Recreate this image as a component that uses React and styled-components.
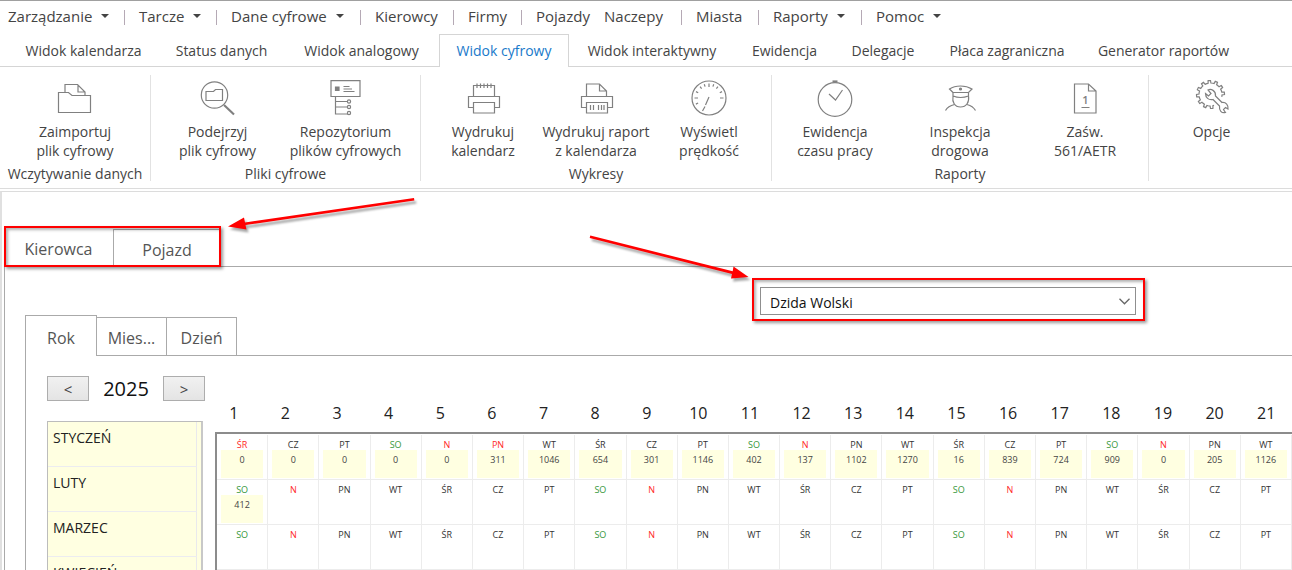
import React from 'react';
import styled, { createGlobalStyle, css } from 'styled-components';

const GlobalStyle = createGlobalStyle`
  *, *::before, *::after { box-sizing: border-box; }
  body {
    margin: 0;
    background: #fff;
    color: #444;
    font-family: "Open Sans", "Noto Sans", sans-serif;
    font-size: 14px;
  }
  button, select { font: inherit; color: inherit; }
`;

const Screen = styled.div`
  display: flex;
  flex-direction: column;
  height: 100vh;
  overflow: hidden;
`;

/* ---------- main menu ---------- */

const MenuBar = styled.nav`
  display: flex;
  flex: none;
  height: 34px;
  padding-bottom: 3px;
  border-top: 1px solid #a0a0a0;
`;

const MenuItem = styled.button`
  display: flex;
  align-items: center;
  flex: none;
  width: ${(p) => p.$width}px;
  padding: 0 0 0 ${(p) => p.$indent || 14}px;
  border: 0;
  background: none;
  font-size: 15px;
  line-height: 20px;
  white-space: nowrap;
`;

const Caret = styled.span`
  margin-left: 9px;
  border: 4px solid transparent;
  border-top-color: #444;
  border-bottom: 0;
`;

const Divider = styled.span`
  width: 1px;
  height: 15px;
  margin-top: 2px;
  margin-left: auto;
  background: #b5a9b5;
`;

/* ---------- ribbon ---------- */

const RibbonTabs = styled.div`
  display: flex;
  flex: none;
  height: 33px;
  padding-left: 8px;
  border-bottom: 1px solid #d5d5d5;
`;

const RibbonTab = styled.button`
  flex: none;
  width: ${(p) => p.$width}px;
  height: 33px;
  padding: 0 0 1px;
  border: 1px solid transparent;
  border-bottom: 0;
  background: none;
  white-space: nowrap;
  ${(p) => p.$active && css`
    border-color: #d5d5d5;
    background: #fff;
    color: #1979ca;
  `}
`;

const Ribbon = styled.div`
  display: flex;
  flex: none;
  height: 122px;
  padding: 8px 0 7px;
  border-bottom: 1px solid #dcdcdc;
`;

const RibbonGroup = styled.section`
  display: flex;
  flex-direction: column;
  flex: none;
  width: ${(p) => p.$width}px;
  border-right: ${(p) => (p.$last ? 0 : 1)}px solid #e2e2e2;
`;

const RibbonButtons = styled.div`
  display: flex;
  justify-content: center;
  flex: 1;
`;

const RibbonButton = styled.button`
  display: flex;
  flex-direction: column;
  align-items: center;
  width: ${(p) => p.$width}px;
  padding: 5px 0 0;
  border: 0;
  background: none;
  line-height: 19px;
  white-space: pre;
`;

const RibbonIcon = styled.svg`
  width: 36px;
  height: 36px;
  margin-bottom: 6px;
  overflow: visible;
  fill: none;
  stroke: #808080;
  stroke-width: 1.2;
`;

const GroupCaption = styled.div`
  height: 18px;
  line-height: 22px;
  text-align: center;
  white-space: nowrap;
`;

/* ---------- workspace ---------- */

const Workspace = styled.main`
  display: flex;
  flex-direction: column;
  flex: 1;
  min-height: 0;
  margin-top: 2px;
  padding: 37px 0 0 2px;
  border-top: 1px solid #dcdcdc;
  border-left: 2px solid #e0e0e0;
`;

const SubjectTabs = styled.div`
  position: relative;
  display: flex;
  flex: none;
  width: 217px;
  height: 37px;
`;

const SubjectTab = styled.button`
  width: ${(p) => p.$width}px;
  padding: ${(p) => (p.$active ? 2 : 4)}px 0 0;
  border: 0 solid #aaa;
  border-right-width: ${(p) => (p.$active ? 1 : 0)}px;
  border-top-width: ${(p) => (p.$active ? 0 : 1)}px;
  background: #fff;
  color: #555;
  font-size: 16px;
`;

const Highlight = styled.span`
  position: absolute;
  inset: ${(p) => p.$inset};
  border: 2px solid #f00;
  box-shadow: 2px 2px 3px rgba(0, 0, 0, 0.4), inset 2px 2px 3px rgba(0, 0, 0, 0.3);
  pointer-events: none;
`;

const Arrow = styled.svg`
  position: absolute;
  top: ${(p) => p.$top}px;
  left: ${(p) => p.$left}px;
  width: 200px;
  height: 54px;
  overflow: visible;
  fill: #f00;
  stroke: none;
  filter: drop-shadow(2px 3px 1px rgba(0, 0, 0, 0.35));
  pointer-events: none;
`;

const SubjectPanel = styled.div`
  display: flex;
  flex-direction: column;
  flex: 1;
  min-height: 0;
  padding: 20px 0 0 20px;
  border-top: 1px solid #aaa;
  border-left: 1px solid #aaa;
`;

const DriverRow = styled.div`
  display: flex;
  justify-content: flex-end;
  flex: none;
  padding-right: 156px;
`;

const DriverPicker = styled.div`
  position: relative;
  width: 376px;
  height: 28px;
`;

const DriverSelect = styled.select`
  width: 100%;
  height: 28px;
  padding: 2px 30px 0 9px;
  border: 1px solid #8f8f8f;
  border-radius: 0;
  outline: 0;
  background: #fff;
  color: #111;
  appearance: none;
`;

const SelectChevron = styled.svg`
  position: absolute;
  top: 11px;
  right: 6px;
  width: 11px;
  height: 7px;
  fill: none;
  stroke: #666;
  stroke-width: 1.3;
  pointer-events: none;
`;

const ViewTabs = styled.div`
  display: flex;
  align-items: flex-end;
  flex: none;
  height: 40px;
`;

const ViewTab = styled.button`
  width: ${(p) => p.$width}px;
  height: 38px;
  padding: 3px 0 0;
  border: 1px solid #aaa;
  border-left-width: ${(p) => (p.$joined ? 0 : 1)}px;
  border-bottom: 0;
  background: #fff;
  color: #555;
  font-size: 16px;
  ${(p) => p.$active && css`
    z-index: 1;
    height: 41px;
    margin-bottom: -1px;
    padding: 3px 0 0;
  `}
`;

const YearView = styled.div`
  display: flex;
  flex: 1;
  min-height: 0;
  padding: 20px 0 0 21px;
  border-top: 1px solid #aaa;
  border-left: 1px solid #aaa;
`;

const MonthColumn = styled.div`
  flex: none;
  width: 159px;
`;

const YearSwitch = styled.div`
  display: flex;
  align-items: center;
  justify-content: space-between;
  width: 158px;
  height: 25px;
  margin-bottom: 20px;
  color: #111;
  font-size: 20px;
`;

const StepButton = styled.button`
  width: 42px;
  height: 25px;
  padding: 0;
  border: 1px solid #adadad;
  background: linear-gradient(#f1f1f1, #e4e4e4);
  color: #444;
  font-size: 15px;
  line-height: 20px;
`;

const MonthList = styled.ul`
  width: 156px;
  margin: 0;
  padding: 0 4px 0 0;
  border: 1px solid #bcbcbc;
  border-right: 2px solid #c8c8c8;
  background: #ffffe1;
  list-style: none;
`;

const Month = styled.li`
  height: 45px;
  padding: 6px 0 0 5px;
  border-right: 1px solid #e9e9ec;
  border-bottom: 1px solid #ececf0;
  color: #222;
  font-size: 14px;
  line-height: 20px;
`;

const DayColumn = styled.div`
  flex: 1;
  min-width: 0;
`;

const DayNumbers = styled.div`
  display: grid;
  grid-template-columns: repeat(21, 1fr);
  padding: 25px 0 7px 2px;
  color: #222;
  font-size: 16px;
  line-height: 24px;
  text-align: center;
`;

const DayFrame = styled.div`
  margin-left: 9px;
  padding-top: 1px;
  border-top: 2px solid #8c8c8c;
  border-left: 2px solid #8c8c8c;
`;

const DayTable = styled.table`
  width: 100%;
  table-layout: fixed;
  border-collapse: separate;
  border-spacing: 0;
  font-size: 9px;
  text-align: center;
`;

const DayCell = styled.td`
  height: 45px;
  padding: 4px 4px 1px;
  border-right: 1px solid #ececec;
  border-bottom: 1px solid #ececec;
  vertical-align: top;
`;

const tones = { red: '#ff2626', green: '#36973b', plain: '#333' };

const Weekday = styled.div`
  color: ${(p) => tones[p.$tone]};
  line-height: 11px;
`;

const Distance = styled.div`
  height: 28px;
  background: #ffffe1;
  color: #444;
  line-height: 20px;
`;

/* ---------- icons ---------- */

const polar = (cx, cy, r, deg) => {
  const a = (deg * Math.PI) / 180;
  return `${(cx + r * Math.cos(a)).toFixed(2)} ${(cy + r * Math.sin(a)).toFixed(2)}`;
};

const gaugeTicks = [-205, -180, -154, -128, -109, -90, -71, -52, -26, 0]
  .map((d) => `M${polar(18, 18, 14.5, d)}L${polar(18, 18, d % 90 === 0 ? 11 : 12, d)}`)
  .join('');

const gearOutline = (() => {
  const at = (r, deg) => polar(16.5, 14.5, r, deg);
  let d = `M${at(11.5, 72)}`;
  for (let i = 0; i < 10; i += 1) {
    const a = 78 + i * 30;
    d += `L${at(11.5, a)}L${at(14, a + 2)}A14 14 0 0 1 ${at(14, a + 12)}L${at(11.5, a + 14)}`;
    d += `A11.5 11.5 0 0 1 ${at(11.5, a + 24)}`;
  }
  return d;
})();

const icons = {
  folder: (
    <>
      <path d="M1.5 12.500H11.500L15 15.500H33.500V32.500H1.500Z" />
      <path d="M8 12.500V4.500H20.500L28 12V15.500M21 4.500V12H28" />
    </>
  ),
  preview: (
    <>
      <circle cx="14.5" cy="15" r="13.2" />
      <path d="M6 11.5H13.5L15.5 9.5H22.5V20.5H6Z" />
      <path d="M24 25L34 34.500" strokeWidth="2.2" />
    </>
  ),
  repository: (
    <>
      <path d="M3 .7H32V16.500H3ZM7.500 16.500V34H20M7.500 21.500H19M7.500 27H19" />
      <path d="M7.500 7H11V10.500H7.500Z" fill="#808080" />
      <path d="M15.500 6.500H21.500M15.500 9H24M15.500 11.500H26.500" />
      <circle cx="21" cy="21.500" r="1.600" />
      <circle cx="21" cy="27" r="1.600" />
      <circle cx="21" cy="33" r="1.600" />
    </>
  ),
  printCalendar: (
    <>
      <path d="M8.500 16V5.500H29.500V16M12 3.500V8M15.500 3.500V8M19 3.500V8M22.500 3.500V8M26 3.500V8" />
      <path d="M8.500 27.500H3.500V16.500H34.500V27.500H29.500" />
      <path d="M8.500 22.500H29.500V33H8.500Z" />
    </>
  ),
  printReport: (
    <>
      <path d="M8.500 16V4H21.500L28.500 11V16M21.500 4V11H28.500" />
      <path d="M8.500 27.500H3.500V16.500H34.500V27.500H29.500" />
      <path d="M8.500 22.500H29.500V33H8.500Z" />
      <path d="M12.500 25V30M15.500 25V30M20.500 25V30M23.500 25V30M26 25V30" />
    </>
  ),
  gauge: (
    <>
      <circle cx="18" cy="18" r="17" />
      <path d={gaugeTicks} />
      <path d="M18 17L14.500 25M14 26.500L11.500 31" />
    </>
  ),
  clock: (
    <>
      <circle cx="18" cy="19.500" r="16.800" />
      <path d="M15.500 1.400H20.500" strokeWidth="2" />
      <path d="M12 14L18.500 20L25.500 10" />
    </>
  ),
  officer: (
    <>
      <path d="M11 12.500L7.500 9Q12 6 18.500 6T30 9L26.500 12.500Z" />
      <path d="M11 12.500V16Q18.500 19 26.500 16V12.500M11 16C10 22 12.500 27 18.500 27S27.500 22 26.500 16" />
      <path d="M12.500 24.500Q6 26 3.500 30.500M25 24.500Q31 26 33.500 30.500" />
      <circle cx="18.500" cy="9" r="1" fill="#808080" />
    </>
  ),
  document: (
    <>
      <path d="M7.500 4H21.500L29 11V33H7.500ZM21.500 4V11H29M14.500 27.500H22.500" />
      <text x="18.500" y="24" fill="#808080" stroke="none" fontSize="11" fontWeight="600" textAnchor="middle">1</text>
    </>
  ),
  options: (
    <>
      <path d={gearOutline} />
      <path d="M14 10C17 8.500 22 10.500 21.500 16L28 22.500C32 22 34.500 25 34 29L31.500 27.500L29.500 29.500L31.500 32.500C27.500 33.500 25 30.500 25.500 26L19 19.500C14.500 20.500 11.500 17.500 11.500 13.500L14.500 16L17 13.500Z" />
    </>
  ),
};

/* ---------- data ---------- */

const menu = [
  { label: 'Zarządzanie', width: 125, indent: 8, caret: true, divider: true },
  { label: 'Tarcze', width: 92, caret: true, divider: true },
  { label: 'Dane cyfrowe', width: 144, caret: true, divider: true },
  { label: 'Kierowcy', width: 93, divider: true },
  { label: 'Firmy', width: 68, divider: true },
  { label: 'Pojazdy', width: 70 },
  { label: 'Naczepy', width: 90, indent: 12, divider: true },
  { label: 'Miasta', width: 77, divider: true },
  { label: 'Raporty', width: 103, caret: true, divider: true },
  { label: 'Pomoc', width: 90, caret: true },
];

const ribbonTabs = [
  ['Widok kalendarza', 151],
  ['Status danych', 125],
  ['Widok analogowy', 155],
  ['Widok cyfrowy', 130],
  ['Widok interaktywny', 166],
  ['Ewidencja', 99],
  ['Delegacje', 98],
  ['Płaca zagraniczna', 150],
  ['Generator raportów', 163],
];

const ribbonGroups = [
  {
    caption: 'Wczytywanie danych',
    width: 151,
    items: [['folder', 'Zaimportuj\nplik cyfrowy', 120]],
  },
  {
    caption: 'Pliki cyfrowe',
    width: 270,
    items: [
      ['preview', 'Podejrzyj\nplik cyfrowy', 120],
      ['repository', 'Repozytorium\nplików cyfrowych', 136],
    ],
  },
  {
    caption: 'Wykresy',
    width: 351,
    items: [
      ['printCalendar', 'Wydrukuj\nkalendarz', 113],
      ['printReport', 'Wydrukuj raport\nz kalendarza', 113],
      ['gauge', 'Wyświetl\nprędkość', 113],
    ],
  },
  {
    caption: 'Raporty',
    width: 377,
    items: [
      ['clock', 'Ewidencja\nczasu pracy', 125],
      ['officer', 'Inspekcja\ndrogowa', 125],
      ['document', 'Zaśw.\n561/AETR', 125],
    ],
  },
  { caption: '', width: 125, items: [['options', 'Opcje', 125]] },
];

const weekdays = ['PN', 'WT', 'ŚR', 'CZ', 'PT', 'SO', 'N'];
const dayNumbers = Array.from({ length: 21 }, (_, i) => i + 1);

const calendar = [
  {
    month: 'STYCZEŃ',
    firstDay: 2,
    holidays: [1, 6],
    distances: [0, 0, 0, 0, 0, 311, 1046, 654, 301, 1146, 402, 137, 1102, 1270, 16, 839, 724, 909, 0, 205, 1126],
  },
  { month: 'LUTY', firstDay: 5, holidays: [], distances: [412] },
  { month: 'MARZEC', firstDay: 5, holidays: [], distances: [] },
];

const months = ['STYCZEŃ', 'LUTY', 'MARZEC', 'KWIECIEŃ'];

const toneOf = (name, isHoliday) => {
  if (isHoliday || name === 'N') return 'red';
  return name === 'SO' ? 'green' : 'plain';
};

/* ---------- page ---------- */

function MainMenu() {
  return (
    <MenuBar>
      {menu.map((m) => (
        <MenuItem key={m.label} $width={m.width} $indent={m.indent}>
          {m.label}
          {m.caret && <Caret />}
          {m.divider && <Divider />}
        </MenuItem>
      ))}
    </MenuBar>
  );
}

function MainRibbon() {
  return (
    <>
      <RibbonTabs role="tablist">
        {ribbonTabs.map(([label, width]) => (
          <RibbonTab key={label} role="tab" $width={width} $active={label === 'Widok cyfrowy'}>
            {label}
          </RibbonTab>
        ))}
      </RibbonTabs>
      <Ribbon>
        {ribbonGroups.map((g, i) => (
          <RibbonGroup key={g.width} $width={g.width} $last={i === ribbonGroups.length - 1}>
            <RibbonButtons>
              {g.items.map(([icon, label, width]) => (
                <RibbonButton key={icon} $width={width}>
                  <RibbonIcon viewBox="0 0 36 36" aria-hidden="true">{icons[icon]}</RibbonIcon>
                  {label}
                </RibbonButton>
              ))}
            </RibbonButtons>
            <GroupCaption>{g.caption}</GroupCaption>
          </RibbonGroup>
        ))}
      </Ribbon>
    </>
  );
}

function YearCalendar() {
  return (
    <YearView>
      <MonthColumn>
        <YearSwitch>
          <StepButton aria-label="Poprzedni rok">&lt;</StepButton>
          2025
          <StepButton aria-label="Następny rok">&gt;</StepButton>
        </YearSwitch>
        <MonthList>
          {months.map((m) => <Month key={m}>{m}</Month>)}
        </MonthList>
      </MonthColumn>
      <DayColumn>
        <DayNumbers>
          {dayNumbers.map((n) => <span key={n}>{n}</span>)}
        </DayNumbers>
        <DayFrame>
          <DayTable>
            <tbody>
              {calendar.map((row) => (
                <tr key={row.month}>
                  {dayNumbers.map((n) => {
                    const name = weekdays[(row.firstDay + n - 1) % 7];
                    const distance = row.distances[n - 1];
                    return (
                      <DayCell key={n}>
                        <Weekday $tone={toneOf(name, row.holidays.includes(n))}>{name}</Weekday>
                        {distance !== undefined && <Distance>{distance}</Distance>}
                      </DayCell>
                    );
                  })}
                </tr>
              ))}
            </tbody>
          </DayTable>
        </DayFrame>
      </DayColumn>
    </YearView>
  );
}

export default function App() {
  return (
    <Screen>
      <GlobalStyle />
      <MainMenu />
      <MainRibbon />
      <Workspace>
        <SubjectTabs role="tablist">
          <SubjectTab role="tab" $width={110} $active>Kierowca</SubjectTab>
          <SubjectTab role="tab" $width={106}>Pojazd</SubjectTab>
          <Highlight $inset="-3px 0 -1px 0" />
          <Arrow $top={-30} $left={224} viewBox="0 0 200 54" aria-hidden="true">
            <path d="M186 -1L186.400 1.500L17.500 26L18.500 30.500L0 27.500L16 18.500L17 23.500Z" />
          </Arrow>
        </SubjectTabs>
        <SubjectPanel>
          <DriverRow>
            <DriverPicker>
              <DriverSelect aria-label="Kierowca" defaultValue="Dzida Wolski">
                <option>Dzida Wolski</option>
              </DriverSelect>
              <SelectChevron viewBox="0 0 11 7" aria-hidden="true">
                <path d="M.5 .8L5.500 5.800L10.500 .8" />
              </SelectChevron>
              <Highlight $inset="-9px -9px -6px -8px" />
              <Arrow $top={-51} $left={-170} viewBox="0 0 200 54" aria-hidden="true">
                <path d="M.3 -.5L-.3 2L142 38L141 42.500L158.500 41L143.500 30.500L142.700 35.300Z" />
              </Arrow>
            </DriverPicker>
          </DriverRow>
          <ViewTabs role="tablist">
            <ViewTab role="tab" $width={72} $active>Rok</ViewTab>
            <ViewTab role="tab" $width={70} $joined>Mies...</ViewTab>
            <ViewTab role="tab" $width={70} $joined>Dzień</ViewTab>
          </ViewTabs>
          <YearCalendar />
        </SubjectPanel>
      </Workspace>
    </Screen>
  );
}
